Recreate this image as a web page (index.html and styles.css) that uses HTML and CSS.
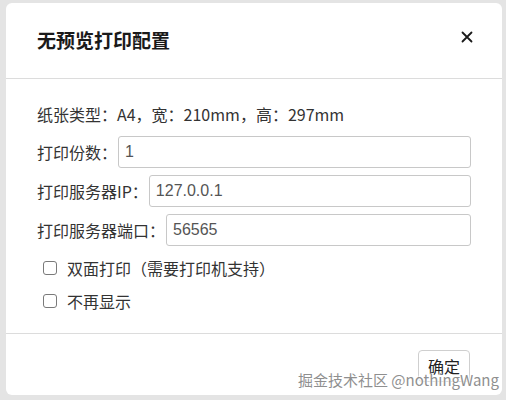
FILE: index.html
```html
<!DOCTYPE html>
<html lang="zh">
<head>
<meta charset="utf-8">
<title>无预览打印配置</title>
<link rel="stylesheet" href="styles.css">
</head>
<body>
<div class="dialog">
  <div class="dialog-header">
    <h2 class="dialog-title">无预览打印配置</h2>
    <button class="close-btn" aria-label="关闭">
      <svg width="12" height="12" viewBox="0 0 12 12"><path d="M1.5 1.5L10.5 10.5M10.5 1.5L1.5 10.5" stroke="#1a1a1a" stroke-width="1.8" stroke-linecap="round"/></svg>
    </button>
  </div>
  <div class="dialog-body">
    <div class="info">纸张类型：A4，宽：210mm，高：297mm</div>
    <div class="field"><label class="field-label">打印份数：</label><input class="field-input" type="text" value="1"></div>
    <div class="field"><label class="field-label">打印服务器IP：</label><input class="field-input" type="text" value="127.0.0.1"></div>
    <div class="field"><label class="field-label">打印服务器端口：</label><input class="field-input" type="text" value="56565"></div>
    <label class="check"><input type="checkbox" class="check-box"><span>双面打印（需要打印机支持）</span></label>
    <label class="check"><input type="checkbox" class="check-box"><span>不再显示</span></label>
  </div>
  <div class="dialog-footer">
    <button class="ok-btn">确定</button>
  </div>
</div>
<div class="watermark">掘金技术社区 @nothingWang</div>
</body>
</html>
```
FILE: styles.css
```css
html, body {
  margin: 0;
  padding: 0;
}
body {
  background: #e4e4e4;
  font-family: "Noto Sans CJK SC", "Noto Sans", sans-serif;
  color: #333;
  width: 506px;
  height: 400px;
  overflow: hidden;
  position: relative;
}
.dialog {
  margin: 3px 0 0 6px;
  width: 496px;
  height: 392px;
  background: #fff;
  border-radius: 6px;
  display: flex;
  flex-direction: column;
  box-sizing: border-box;
}
.dialog-header {
  border-bottom: 1px solid #dcdcdc;
  display: flex;
  align-items: center;
  justify-content: space-between;
  padding: 0 25px 2px 25px;
  height: 73px;
}
.dialog-title {
  margin: 0 0 0 6px;
  font-size: 19px;
  font-weight: 700;
  color: #1a1a1a;
  line-height: 24px;
}
.close-btn {
  border: 0;
  background: none;
  padding: 0;
  width: 12px;
  height: 12px;
  margin-right: 4px;
  margin-top: -6px;
  display: flex;
}
.dialog-body {
  padding: 23px 31px 20px 31px;
  display: flex;
  flex-direction: column;
  font-size: 16px;
  line-height: 24px;
  border-bottom: 1px solid #dcdcdc;
}
.info {
  height: 24px;
  margin-bottom: 10px;
}
.field {
  display: flex;
  align-items: center;
  height: 32px;
  margin-bottom: 7px;
}
.field:last-of-type {
  margin-bottom: 10px;
}
.field-label {
  white-space: nowrap;
  margin-right: 1px;
}
.field-input {
  flex: 1;
  height: 32px;
  box-sizing: border-box;
  border: 1px solid #c8c8c8;
  border-radius: 3px;
  padding: 0 6px;
  font-family: "Liberation Sans", Arial, sans-serif;
  font-size: 16px;
  color: #555;
  outline: none;
}
.check {
  display: flex;
  align-items: center;
  height: 24px;
  margin-bottom: 9px;
}
.check:last-child {
  margin-bottom: 0;
}
.check-box {
  appearance: none;
  -webkit-appearance: none;
  width: 14px;
  height: 14px;
  margin: 0 10px 0 6px;
  border: 1px solid #7a7a7a;
  border-radius: 3px;
  background: #fff;
  box-sizing: border-box;
}
.dialog-footer {
  flex: 1;
  display: flex;
  justify-content: flex-end;
  align-items: flex-start;
  padding: 16px 32px 0 0;
}
.ok-btn {
  width: 52px;
  height: 32px;
  border: 1px solid #cfcfcf;
  border-radius: 4px;
  background: #fff;
  font-family: "Noto Sans CJK SC", sans-serif;
  font-size: 16px;
  color: #222;
  padding: 0;
}
.watermark {
  position: absolute;
  left: 298px;
  top: 369px;
  font-size: 15px;
  line-height: 22px;
  color: #8f8f8f;
  white-space: nowrap;
  text-shadow: 0 0 2px #fff, 0 0 2px #fff, 0 0 3px #fff;
  font-family: "Noto Sans CJK SC", "Noto Sans", sans-serif;
}
```
